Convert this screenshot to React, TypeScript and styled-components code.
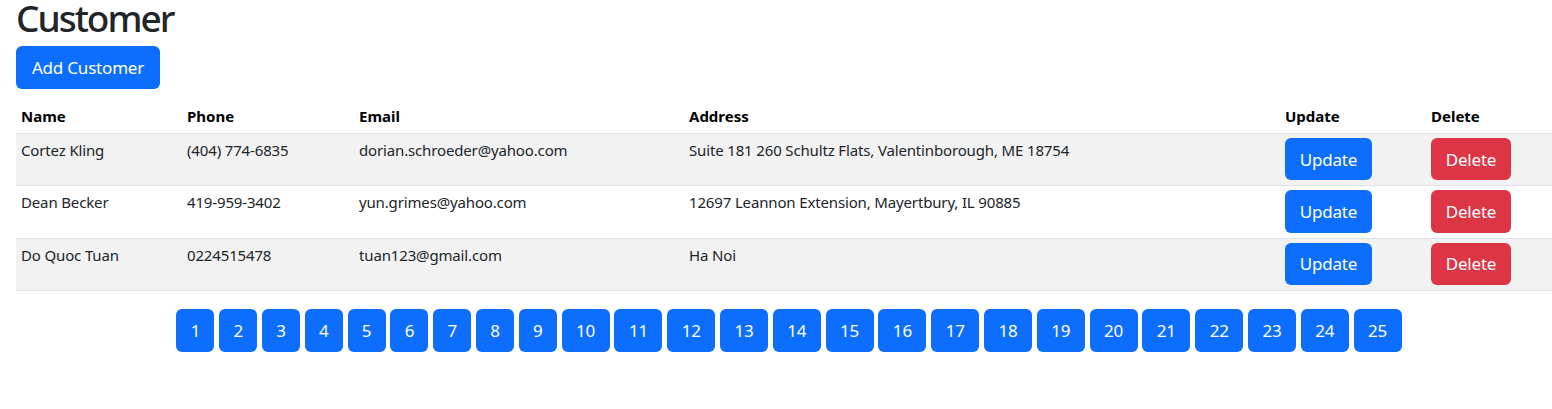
import React from "react";
import styled, { createGlobalStyle } from "styled-components";

const GlobalStyle = createGlobalStyle`
  html, body { margin: 0; padding: 0; background: #fff; }
  body {
    font-family: "Noto Sans", "Open Sans", sans-serif;
    color: #212529;
    -webkit-font-smoothing: antialiased;
  }
  * { box-sizing: border-box; }
`;

const Page = styled.div`
  padding: 0 0 0 16px;
  display: flex;
  flex-direction: column;
  align-items: flex-start;
`;

const Title = styled.h1`
  margin: 0 0 11px;
  font-size: 37px;
  line-height: 35px;
  font-weight: 500;
  letter-spacing: -2px;
  color: #212529;
`;

const Button = styled.button<{ $variant?: "primary" | "danger"; $w?: number }>`
  display: inline-flex;
  align-items: center;
  justify-content: center;
  height: 42.3px;
  width: ${(p) => (p.$w ? `${p.$w}px` : "auto")};
  padding: 0 14px;
  border: none;
  border-radius: 6px;
  font-family: inherit;
  font-size: 17px;
  letter-spacing: -0.2px;
  color: #fff;
  background: ${(p) => (p.$variant === "danger" ? "#dc3545" : "#0d6efd")};
  cursor: pointer;
`;

const AddButton = styled(Button)`
  height: 43px;
  width: 144px;
  margin-bottom: 11px;
`;

const Table = styled.table`
  width: 1536px;
  border-collapse: collapse;
  table-layout: fixed;
  font-size: 15px;
`;

const Col = styled.col<{ $w: number }>`
  width: ${(p) => p.$w}px;
`;

const Th = styled.th`
  text-align: left;
  font-weight: 700;
  font-size: 15px;
  color: #000;
  line-height: 24px;
  padding: 4px 5px 5px;
  border-bottom: 1px solid #dee2e6;
`;

const Tr = styled.tr<{ $striped: boolean }>`
  background: ${(p) => (p.$striped ? "#f2f2f2" : "transparent")};
`;

const Td = styled.td`
  vertical-align: top;
  line-height: 24px;
  padding: 4px 5px 5px;
  border-bottom: 1px solid #dee2e6;
  color: #212529;
  letter-spacing: -0.15px;
`;

const Pagination = styled.nav`
  align-self: stretch;
  display: flex;
  justify-content: center;
  gap: 4.8px;
  margin-top: 18px;
  padding-left: 10px;
`;

const PageButton = styled(Button)<{ $wide: boolean }>`
  height: 43px;
  width: ${(p) => (p.$wide ? 48 : 38)}px;
  padding: 0;
`;

const customers = [
  {
    name: "Cortez Kling",
    phone: "(404) 774-6835",
    email: "dorian.schroeder@yahoo.com",
    address: "Suite 181 260 Schultz Flats, Valentinborough, ME 18754",
  },
  {
    name: "Dean Becker",
    phone: "419-959-3402",
    email: "yun.grimes@yahoo.com",
    address: "12697 Leannon Extension, Mayertbury, IL 90885",
  },
  {
    name: "Do Quoc Tuan",
    phone: "0224515478",
    email: "tuan123@gmail.com",
    address: "Ha Noi",
  },
];

const widths = [166, 172, 330, 596, 146, 126];

export default function App() {
  return (
    <>
      <GlobalStyle />
      <Page>
        <Title>Customer</Title>
        <AddButton>Add Customer</AddButton>
        <Table>
          <colgroup>
            {widths.map((w, i) => (
              <Col key={i} $w={w} />
            ))}
          </colgroup>
          <thead>
            <tr>
              <Th>Name</Th>
              <Th>Phone</Th>
              <Th>Email</Th>
              <Th>Address</Th>
              <Th>Update</Th>
              <Th>Delete</Th>
            </tr>
          </thead>
          <tbody>
            {customers.map((c, i) => (
              <Tr key={c.email} $striped={i % 2 === 0}>
                <Td>{c.name}</Td>
                <Td>{c.phone}</Td>
                <Td>{c.email}</Td>
                <Td>{c.address}</Td>
                <Td>
                  <Button $w={87}>Update</Button>
                </Td>
                <Td>
                  <Button $variant="danger" $w={80}>
                    Delete
                  </Button>
                </Td>
              </Tr>
            ))}
          </tbody>
        </Table>
        <Pagination>
          {Array.from({ length: 25 }, (_, i) => i + 1).map((n) => (
            <PageButton key={n} $wide={n >= 10}>
              {n}
            </PageButton>
          ))}
        </Pagination>
      </Page>
    </>
  );
}
